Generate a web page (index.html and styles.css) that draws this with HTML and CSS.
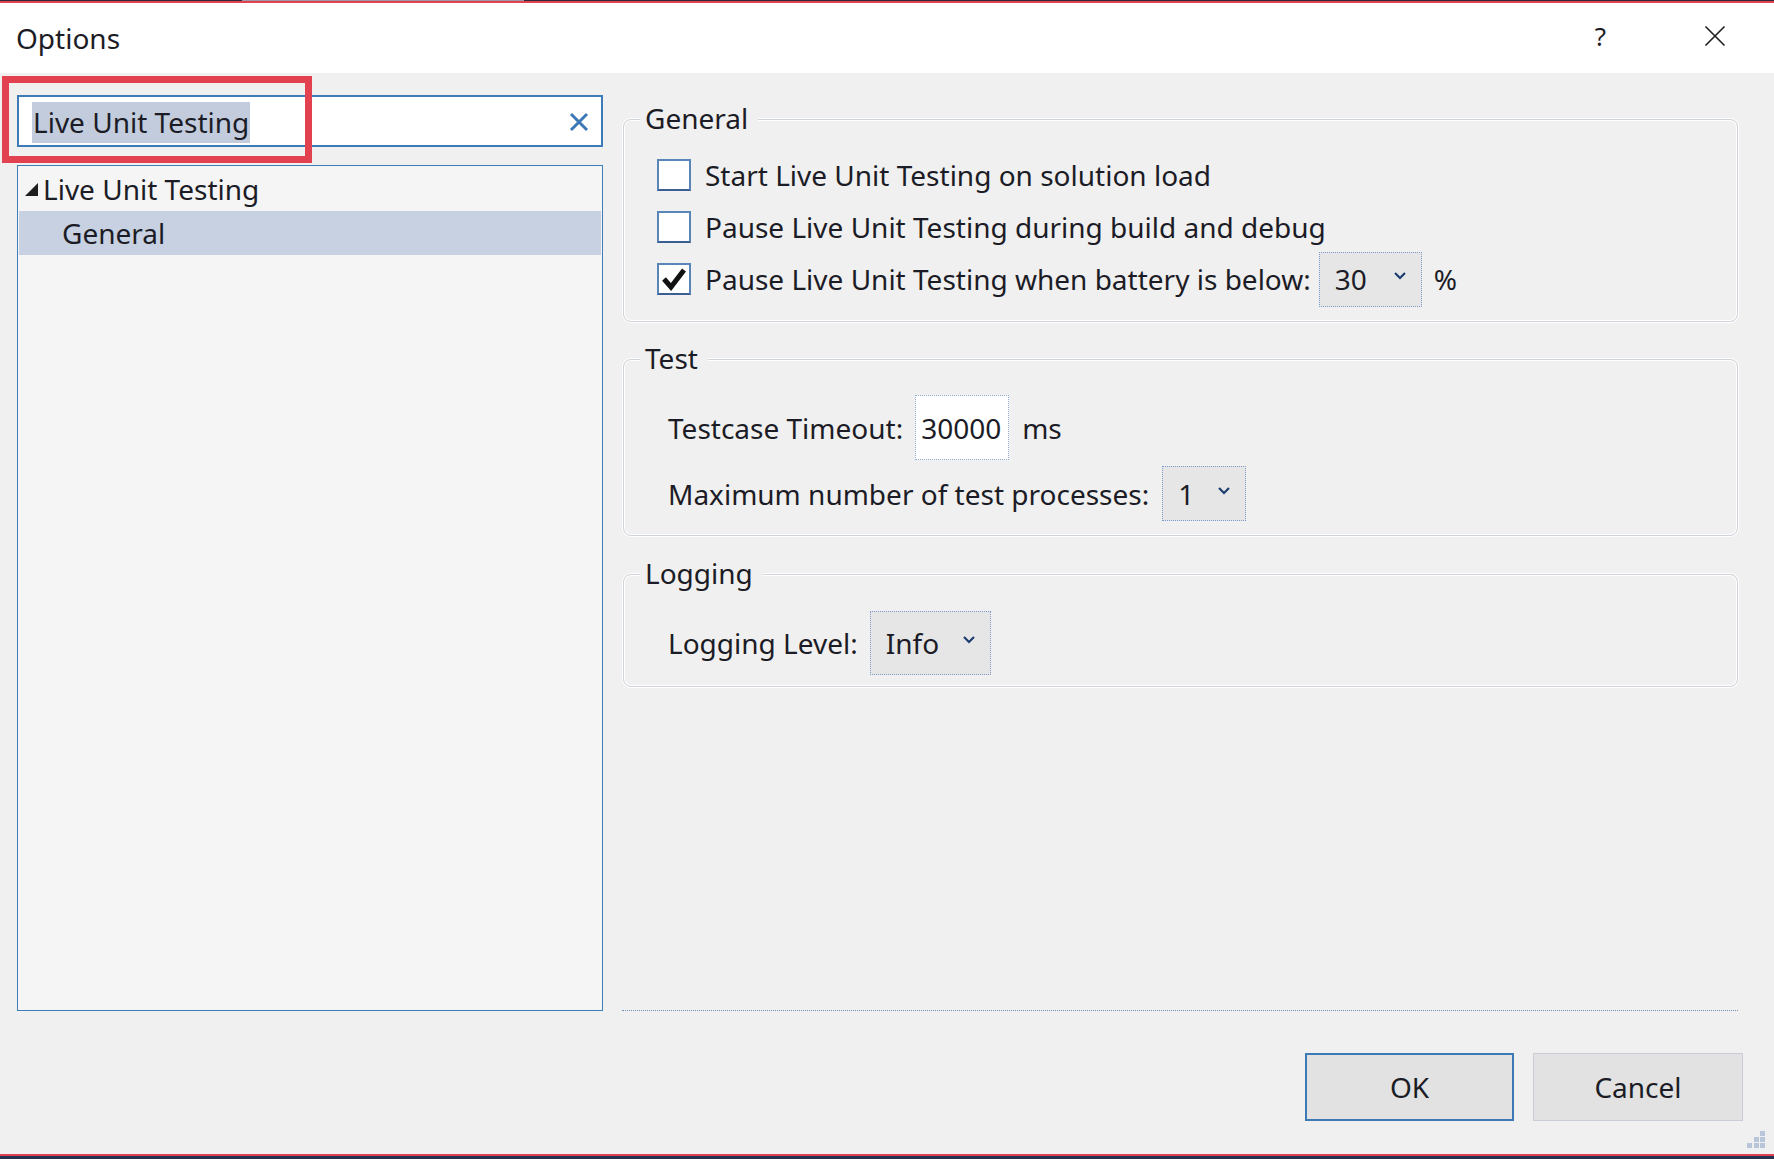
FILE: index.html
```html
<!DOCTYPE html>
<html>
<head>
<meta charset="utf-8">
<title>Options</title>
<link rel="stylesheet" href="styles.css">
</head>
<body>
<div class="window">
  <div class="topline">
    <span class="seg seg-a"></span><span class="seg seg-b"></span><span class="seg seg-c"></span>
  </div>
  <header class="titlebar">
    <div class="title">Options</div>
    <div class="tb-buttons">
      <span class="help">?</span>
      <svg class="close" width="22" height="22" viewBox="0 0 22 22"><path d="M1.5 1.5 L20.5 20.5 M20.5 1.5 L1.5 20.5" stroke="#1e1e1e" stroke-width="1.6" fill="none"/></svg>
    </div>
  </header>
  <main class="content">
    <section class="left">
      <div class="search">
        <span class="search-text"><span class="sel">Live Unit Testing</span></span>
        <svg class="clear" width="20" height="20" viewBox="0 0 20 20"><path d="M2 2 L18 18 M18 2 L2 18" stroke="#3b78b5" stroke-width="3" fill="none"/></svg>
      </div>
      <div class="tree">
        <div class="tree-row">
          <svg class="tri" width="13" height="13" viewBox="0 0 13 13"><polygon points="13,0 13,13 0,13" fill="#1e1e1e"/></svg>
          <span>Live Unit Testing</span>
        </div>
        <div class="tree-row selected"><span class="child">General</span></div>
      </div>
    </section>
    <section class="right">
      <div class="group g-general">
        <span class="legend">General</span>
        <div class="row"><span class="cb"></span><span>Start Live Unit Testing on solution load</span></div>
        <div class="row"><span class="cb"></span><span>Pause Live Unit Testing during build and debug</span></div>
        <div class="row">
          <span class="cb checked"><svg width="30" height="28" viewBox="0 0 30 28"><path d="M5 14 L12 22 L25 5" stroke="#111" stroke-width="5" fill="none" stroke-linejoin="miter"/></svg></span>
          <span>Pause Live Unit Testing when battery is below:</span>
          <span class="combo combo-30"><span>30</span><svg class="chev" width="12" height="8" viewBox="0 0 12 8"><path d="M1 1 L6 6 L11 1" stroke="#1d3d70" stroke-width="2.2" fill="none"/></svg></span>
          <span class="unit">%</span>
        </div>
      </div>
      <div class="group g-test">
        <span class="legend">Test</span>
        <div class="row row-timeout">
          <span>Testcase Timeout:</span>
          <span class="input">30000</span>
          <span class="unit-ms">ms</span>
        </div>
        <div class="row row-proc">
          <span>Maximum number of test processes:</span>
          <span class="combo combo-1"><span>1</span><svg class="chev" width="12" height="8" viewBox="0 0 12 8"><path d="M1 1 L6 6 L11 1" stroke="#1d3d70" stroke-width="2.2" fill="none"/></svg></span>
        </div>
      </div>
      <div class="group g-logging">
        <span class="legend">Logging</span>
        <div class="row row-log">
          <span>Logging Level:</span>
          <span class="combo combo-info"><span>Info</span><svg class="chev" width="12" height="8" viewBox="0 0 12 8"><path d="M1 1 L6 6 L11 1" stroke="#1d3d70" stroke-width="2.2" fill="none"/></svg></span>
        </div>
      </div>
      <div class="separator"></div>
      <div class="buttons">
        <button class="btn btn-ok">OK</button>
        <button class="btn btn-cancel">Cancel</button>
      </div>
    </section>
  </main>
  <div class="bottomline"></div>
  <div class="annot"></div>
  <div class="grip">
    <span class="d d1"></span>
    <span class="d d2"></span><span class="d d3"></span>
    <span class="d d4"></span><span class="d d5"></span><span class="d d6"></span>
  </div>
</div>
</body>
</html>
```

FILE: styles.css
```css
* { box-sizing: border-box; }
html, body { margin: 0; padding: 0; }
body {
  width: 1774px;
  height: 1159px;
  overflow: hidden;
  background: #f0f0f0;
  font-family: "Noto Sans", "Open Sans", sans-serif;
  font-size: 28px;
  color: #1c1c26;
}
.window {
  position: relative;
  width: 1774px;
  height: 1159px;
  display: flex;
  flex-direction: column;
  background: #f0f0f0;
}
.topline {
  height: 3px;
  display: flex;
  border-bottom: 2px solid #e2414f;
}
.seg { height: 1px; }
.seg-a { width: 242px; background: #2a2a3a; }
.seg-b { width: 282px; background: #9a9aa4; }
.seg-c { flex: 1; background: #2a2a3a; }

.titlebar {
  height: 70px;
  background: #ffffff;
  display: flex;
  align-items: center;
  justify-content: space-between;
  padding-left: 16px;
}
.title { font-size: 28px; margin-top: -1px; }
.tb-buttons {
  display: flex;
  align-items: center;
  height: 100%;
}
.help {
  font-size: 26px;
  margin-right: 98px;
  margin-top: -4px;
}
.close { margin-right: 48px; margin-top: -4px; }

.content {
  height: 1081px;
  display: flex;
}
.left {
  width: 603px;
  padding-left: 17px;
  display: flex;
  flex-direction: column;
}
.search {
  margin-top: 22px;
  height: 52px;
  border: 2px solid #3c7bb8;
  background: #ffffff;
  display: flex;
  align-items: center;
  justify-content: space-between;
  padding-left: 13px;
  padding-right: 12px;
}
.search-text { display: flex; margin-top: 3px; }
.sel {
  background: #c2ccdd;
  padding: 3px 1px 4px 1px;
  line-height: 34px;
}
.clear { margin-top: 1px; }

.tree {
  margin-top: 18px;
  height: 846px;
  border: 1px solid #3f7dba;
  background: #f5f5f5;
  padding: 1px;
}
.tree-row {
  height: 44px;
  display: flex;
  align-items: center;
  padding-left: 6px;
}
.tri { margin-right: 5px; margin-top: 1px; }
.tree-row.selected {
  background: #c7d1e1;
  padding-left: 43px;
}

.right {
  width: 1121px;
  margin-left: 19px;
  display: flex;
  flex-direction: column;
}
.group {
  position: relative;
  margin-left: 1px;
  width: 1115px;
  border: 1px solid #cfd3da;
  border-radius: 8px;
  box-shadow: 0 0 0 1px #ffffff, inset 0 0 0 1px #ffffff;
}
.legend {
  position: absolute;
  top: -20px;
  left: 16px;
  background: #f0f0f0;
  padding: 0 10px 0 5px;
  line-height: 36px;
  font-size: 28px;
}
.row {
  display: flex;
  align-items: center;
}
.g-general {
  margin-top: 46px;
  height: 203px;
  padding: 29px 0 0 33px;
}
.g-general .row { height: 52px; }
.cb {
  width: 34px;
  height: 32px;
  background: #ffffff;
  border: 2px solid #5a85b8;
  border-bottom-color: #3b5f94;
  margin-right: 14px;
  display: flex;
  align-items: center;
  justify-content: center;
}
.combo {
  display: flex;
  align-items: center;
  justify-content: space-between;
  background: #e6e6e6;
  border: 1px dotted #7d9ccc;
  padding-left: 15px;
  padding-right: 15px;
}
.chev { margin-top: -6px; }
.combo-30 { width: 103px; height: 55px; margin-left: 8px; }
.unit { margin-left: 12px; }

.g-test {
  margin-top: 37px;
  height: 177px;
  padding: 35px 0 0 44px;
}
.row-timeout { height: 65px; }
.input {
  width: 94px;
  height: 65px;
  margin-left: 12px;
  background: #ffffff;
  border: 1px dotted #8ea8d0;
  display: flex;
  align-items: center;
  padding-left: 5px;
}
.unit-ms { margin-left: 13px; }
.row-proc { margin-top: 6px; height: 55px; }
.combo-1 { width: 84px; height: 55px; margin-left: 13px; }

.g-logging {
  margin-top: 38px;
  height: 113px;
  padding: 36px 0 0 44px;
}
.row-log { height: 64px; }
.combo-info { width: 121px; height: 64px; margin-left: 12px; }

.separator {
  margin-top: auto;
  width: 1116px;
  border-top: 1px dotted #6e8fc0;
}
.buttons {
  margin-top: 42px;
  margin-bottom: 33px;
  height: 68px;
  display: flex;
  justify-content: flex-end;
  gap: 19px;
}
.btn {
  font-family: "Noto Sans", "Open Sans", sans-serif;
  font-size: 28px;
  color: #1c1c26;
  background: #e1e2e1;
  height: 68px;
  width: 210px;
  padding: 0;
}
.btn-ok { width: 209px; border: 2px solid #3d7ab5; }
.btn-cancel { border: 1px solid #c8cdd8; }

.bottomline {
  height: 5px;
  border-top: 2px solid #e2414f;
  background: #23324f;
}

.annot {
  position: absolute;
  left: 2px;
  top: 76px;
  width: 310px;
  height: 87px;
  border: 7px solid #e2414f;
}
.grip {
  position: absolute;
  right: 9px;
  bottom: 10px;
  width: 18px;
  height: 18px;
}
.d {
  position: absolute;
  width: 5px;
  height: 5px;
  background: #b9c5d8;
}
.d1 { left: 13px; top: 0; }
.d2 { left: 7px; top: 6px; }
.d3 { left: 13px; top: 6px; }
.d4 { left: 0; top: 12px; }
.d5 { left: 7px; top: 12px; }
.d6 { left: 13px; top: 12px; }
```
